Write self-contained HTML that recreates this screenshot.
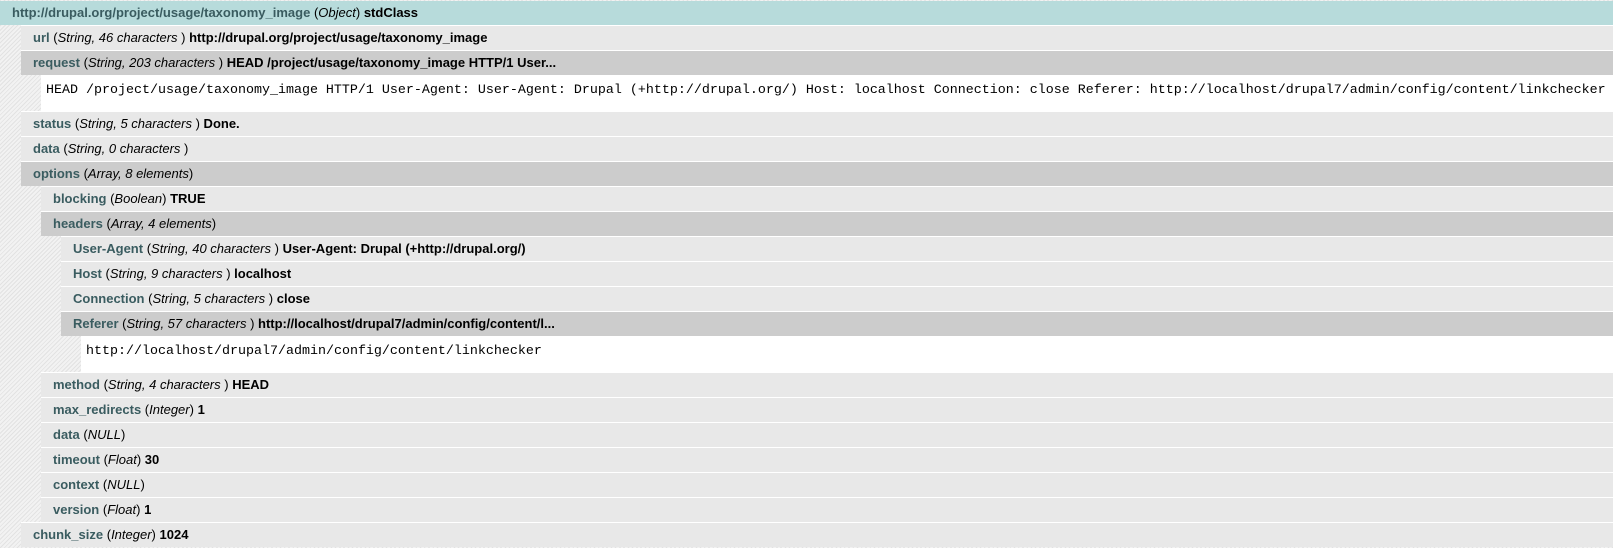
<!DOCTYPE html>
<html><head><meta charset="utf-8"><style>
html,body{margin:0;padding:0}
body{width:1613px;height:547px;overflow:hidden;background:repeating-linear-gradient(135deg,#e2e2e2 0,#e2e2e2 1px,#f2f2f2 1px,#f2f2f2 3px);font-family:"Liberation Sans",Arial,sans-serif;font-size:13px}
.r{height:24px;line-height:24px;border-top:1px solid #fff;background:#e8e8e8;padding-left:12px;white-space:nowrap;overflow:hidden;color:#000;font-weight:bold}
.r.x{background:#cccccc}
.r.t{background:#b7dbdb;padding-left:12px;border-top:0;margin-top:1px;height:24px}
.k{color:#3a5c60}
.ty{font-weight:normal;color:#000}
.ty i{font-style:italic}
.p{background:#fff;height:31px;padding-top:5px;font-family:"Liberation Mono","Courier New",monospace;font-size:13.33px;line-height:22px;padding-left:5px;white-space:nowrap;overflow:hidden;font-weight:normal}
.l1{margin-left:21px}.l2{margin-left:41px}.l3{margin-left:61px}.l4{margin-left:81px}
</style></head><body>
<div class="r t"><span class="k">http://drupal.org/project/usage/taxonomy_image</span> <span class="ty">(<i>Object</i>)</span> stdClass</div>
<div class="r l1"><span class="k">url</span> <span class="ty">(<i>String, 46 characters</i> )</span> http://drupal.org/project/usage/taxonomy_image</div>
<div class="r x l1"><span class="k">request</span> <span class="ty">(<i>String, 203 characters</i> )</span> HEAD /project/usage/taxonomy_image HTTP/1 User...</div>
<div class="p l2">HEAD /project/usage/taxonomy_image HTTP/1 User-Agent: User-Agent: Drupal (+http://drupal.org/) Host: localhost Connection: close Referer: http://localhost/drupal7/admin/config/content/linkchecker</div>
<div class="r l1"><span class="k">status</span> <span class="ty">(<i>String, 5 characters</i> )</span> Done.</div>
<div class="r l1"><span class="k">data</span> <span class="ty">(<i>String, 0 characters</i> )</span></div>
<div class="r x l1"><span class="k">options</span> <span class="ty">(<i>Array, 8 elements</i>)</span></div>
<div class="r l2"><span class="k">blocking</span> <span class="ty">(<i>Boolean</i>)</span> TRUE</div>
<div class="r x l2"><span class="k">headers</span> <span class="ty">(<i>Array, 4 elements</i>)</span></div>
<div class="r l3"><span class="k">User-Agent</span> <span class="ty">(<i>String, 40 characters</i> )</span> User-Agent: Drupal (+http://drupal.org/)</div>
<div class="r l3"><span class="k">Host</span> <span class="ty">(<i>String, 9 characters</i> )</span> localhost</div>
<div class="r l3"><span class="k">Connection</span> <span class="ty">(<i>String, 5 characters</i> )</span> close</div>
<div class="r x l3"><span class="k">Referer</span> <span class="ty">(<i>String, 57 characters</i> )</span> http://localhost/drupal7/admin/config/content/l...</div>
<div class="p l4">http://localhost/drupal7/admin/config/content/linkchecker</div>
<div class="r l2"><span class="k">method</span> <span class="ty">(<i>String, 4 characters</i> )</span> HEAD</div>
<div class="r l2"><span class="k">max_redirects</span> <span class="ty">(<i>Integer</i>)</span> 1</div>
<div class="r l2"><span class="k">data</span> <span class="ty">(<i>NULL</i>)</span></div>
<div class="r l2"><span class="k">timeout</span> <span class="ty">(<i>Float</i>)</span> 30</div>
<div class="r l2"><span class="k">context</span> <span class="ty">(<i>NULL</i>)</span></div>
<div class="r l2"><span class="k">version</span> <span class="ty">(<i>Float</i>)</span> 1</div>
<div class="r l1"><span class="k">chunk_size</span> <span class="ty">(<i>Integer</i>)</span> 1024</div>
</body></html>
